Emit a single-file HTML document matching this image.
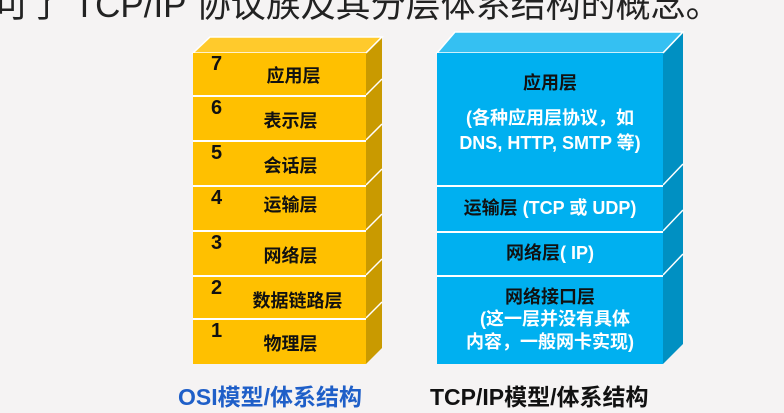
<!DOCTYPE html>
<html><head><meta charset="utf-8"><style>
body{margin:0;width:784px;height:413px;overflow:hidden;background:#f5f3f3;font-family:"Liberation Sans","Noto Sans CJK SC",sans-serif;position:relative}
.t{position:absolute;left:-6px;top:-23px;font-size:35px;color:#222;white-space:nowrap}
.r{position:absolute;box-sizing:border-box;font-weight:bold;font-size:18px;color:#111}
.y{background:#ffc000;left:193px;width:173px;height:44px;border-top:2px solid #fff}
.y .n{position:absolute;left:18px;top:0px;font-size:20px}
.y .l{position:absolute;left:0;right:0;text-align:center;top:10px;padding-left:22px}
.b{background:#00b0f0;left:437px;width:226px;text-align:center;border-top:2px solid #fff;line-height:22px}
.w{color:#fff}
.cap{position:absolute;font-weight:bold;font-size:23px;top:378px}
</style></head><body>
<div class="t">可了 TCP/IP 协议族及其分层体系结构的概念。</div>
<svg width="784" height="413" style="position:absolute;left:0;top:0">
<polygon points="193,53 210,37 382,37 366,53" fill="#ffca2c" stroke="#fff" stroke-width="1.5"/>
<polygon points="366,53 382,37 382,348 366,364" fill="#c99a00"/>
<g stroke="#fff" stroke-width="1.5">
<line x1="366" y1="53" x2="382" y2="37"/><line x1="366" y1="95" x2="382" y2="79"/><line x1="366" y1="140" x2="382" y2="124"/><line x1="366" y1="185" x2="382" y2="169"/><line x1="366" y1="230" x2="382" y2="214"/><line x1="366" y1="275" x2="382" y2="259"/><line x1="366" y1="318" x2="382" y2="302"/></g>
<polygon points="437,53 455,32 683,32 663,53" fill="#35c0f2" stroke="#fff" stroke-width="1.5"/>
<polygon points="663,53 683,32 683,344 663,364" fill="#0090c2"/>
<g stroke="#fff" stroke-width="1.5">
<line x1="663" y1="53" x2="683" y2="32"/><line x1="663" y1="185" x2="683" y2="164"/><line x1="663" y1="231" x2="683" y2="210"/><line x1="663" y1="275" x2="683" y2="254"/></g>
</svg>
<div class="r y" style="top:53px;height:42px;border-top:0"><span class="n">7</span><span class="l" style="top:9px;padding-left:28px">应用层</span></div>
<div class="r y" style="top:95px;height:45px"><span class="n">6</span><span class="l">表示层</span></div>
<div class="r y" style="top:140px;height:45px"><span class="n">5</span><span class="l">会话层</span></div>
<div class="r y" style="top:185px;height:45px"><span class="n">4</span><span class="l" style="top:4px">运输层</span></div>
<div class="r y" style="top:230px;height:45px"><span class="n">3</span><span class="l">网络层</span></div>
<div class="r y" style="top:275px;height:43px"><span class="n">2</span><span class="l" style="padding-left:36px">数据链路层</span></div>
<div class="r y" style="top:318px;height:46px"><span class="n">1</span><span class="l">物理层</span></div>
<div class="r b" style="top:53px;height:132px;border-top:0;padding-top:19px">应用层<div class="w" style="margin-top:12px;line-height:25px">(各种应用层协议，如<br>DNS, HTTP, SMTP 等)</div></div>
<div class="r b" style="top:185px;height:46px;padding-top:10px">运输层 <span class="w">(TCP 或 UDP)</span></div>
<div class="r b" style="top:231px;height:44px;padding-top:9px">网络层<span class="w">( IP)</span></div>
<div class="r b" style="top:275px;height:89px;padding-top:9px">网络接口层<div class="w" style="line-height:23px">&nbsp;&nbsp;(这一层并没有具体<br>内容，一般网卡实现)</div></div>
<div class="cap" style="left:178px;color:#1f5fc8">OSI模型/体系结构</div>
<div class="cap" style="left:430px;color:#111">TCP/IP模型/体系结构</div>
</body></html>
